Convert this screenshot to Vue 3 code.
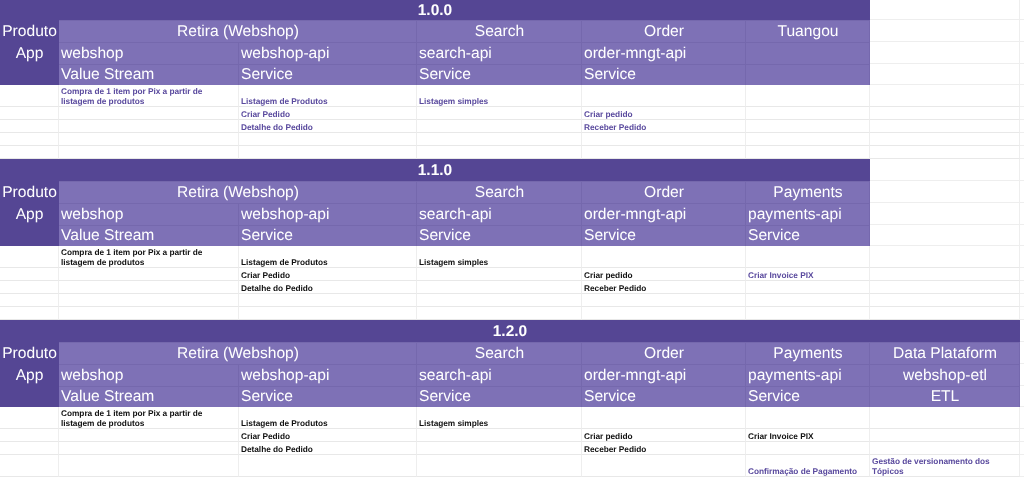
<script setup>
const P = 'accent'
const sections = [
  {
    version: '1.0.0', titleSpan: 6,
    heads: [
      ['Retira (Webshop)', 'Search', 'Order', 'Tuangou', ''],
      ['webshop', 'webshop-api', 'search-api', 'order-mngt-api', '', ''],
      ['Value Stream', 'Service', 'Service', 'Service', '', '']
    ],
    rows: [
      { h: 22, cells: ['Compra de 1 item por Pix a partir de listagem de produtos', 'Listagem de Produtos', 'Listagem simples', '', '', ''], tone: P },
      { h: 13, cells: ['', 'Criar Pedido', '', 'Criar pedido', '', ''], tone: P },
      { h: 13, cells: ['', 'Detalhe do Pedido', '', 'Receber Pedido', '', ''], tone: P },
      { h: 13, cells: ['', '', '', '', '', ''] },
      { h: 13, cells: ['', '', '', '', '', ''] }
    ]
  },
  {
    version: '1.1.0', titleSpan: 6,
    heads: [
      ['Retira (Webshop)', 'Search', 'Order', 'Payments', ''],
      ['webshop', 'webshop-api', 'search-api', 'order-mngt-api', 'payments-api', ''],
      ['Value Stream', 'Service', 'Service', 'Service', 'Service', '']
    ],
    rows: [
      { h: 22, cells: ['Compra de 1 item por Pix a partir de listagem de produtos', 'Listagem de Produtos', 'Listagem simples', '', '', ''] },
      { h: 13, cells: ['', 'Criar Pedido', '', 'Criar pedido', 'Criar Invoice PIX', ''], accent: [4] },
      { h: 13, cells: ['', 'Detalhe do Pedido', '', 'Receber Pedido', '', ''] },
      { h: 13, cells: ['', '', '', '', '', ''] },
      { h: 13, cells: ['', '', '', '', '', ''] }
    ]
  },
  {
    version: '1.2.0', titleSpan: 7,
    heads: [
      ['Retira (Webshop)', 'Search', 'Order', 'Payments', 'Data Plataform'],
      ['webshop', 'webshop-api', 'search-api', 'order-mngt-api', 'payments-api', 'webshop-etl'],
      ['Value Stream', 'Service', 'Service', 'Service', 'Service', 'ETL']
    ],
    rows: [
      { h: 22, cells: ['Compra de 1 item por Pix a partir de listagem de produtos', 'Listagem de Produtos', 'Listagem simples', '', '', ''] },
      { h: 13, cells: ['', 'Criar Pedido', '', 'Criar pedido', 'Criar Invoice PIX', ''] },
      { h: 13, cells: ['', 'Detalhe do Pedido', '', 'Receber Pedido', '', ''] },
      { h: 22, cells: ['', '', '', '', 'Confirmação de Pagamento', 'Gestão de versionamento dos Tópicos'], accent: [4, 5] }
    ]
  }
]
const leftLabels = ['Produto', 'App', '']
function headClass(s, r, i) {
  const col = s.heads[r].length === 5 ? i + 1 : i
  if (col === 5 && s.titleSpan === 6) return 'blank'
  if (col === 5 || (r === 0 && col > 0)) return 'head center'
  return 'head'
}
</script>

<template>
  <div class="sheet">
    <section v-for="s in sections" :key="s.version" class="block">
      <div class="row title-row">
        <div class="title" :class="{ wide: s.titleSpan === 7 }">{{ s.version }}</div>
        <div v-if="s.titleSpan === 6" class="blank"></div>
        <div class="edge"></div>
      </div>

      <div v-for="(cells, r) in s.heads" :key="r" class="row head-row" :class="{ short: r === 2 }">
        <div class="left">{{ leftLabels[r] }}</div>
        <div
          v-for="(c, i) in cells"
          :key="i"
          :class="[headClass(s, r, i), { span2: r === 0 && i === 0 }]"
        >{{ c }}</div>
        <div class="edge"></div>
      </div>

      <div
        v-for="(row, r) in s.rows"
        :key="'d' + r"
        class="row data-row"
        :style="{ height: row.h + 'px' }"
      >
        <div class="data"></div>
        <div
          v-for="(c, i) in row.cells"
          :key="i"
          class="data"
          :class="{ accent: row.tone === 'accent' || (row.accent || []).includes(i) }"
        >{{ c }}</div>
        <div class="edge"></div>
      </div>
    </section>
  </div>
</template>

<style scoped>
.sheet {
  width: 1024px;
  height: 479px;
  overflow: hidden;
  background: #fff;
  font-family: "Liberation Sans", Arial, sans-serif;
  text-rendering: geometricPrecision;
  filter: blur(0.35px);
}
.row {
  display: grid;
  grid-template-columns: 59px 180px 178px 165px 164px 124px 150px 4px;
}
.title-row {
  height: 22px;
}
.block:first-child .title-row {
  height: 20px;
}
.title {
  grid-column: 1 / span 6;
  background: #554694;
  color: #fff;
  font-size: 15.5px;
  font-weight: 700;
  padding-top: 1px;
  box-sizing: border-box;
  display: flex;
  align-items: center;
  justify-content: center;
}
.title.wide {
  grid-column: 1 / span 7;
}
.head-row {
  height: 22px;
}
.head-row.short {
  height: 21px;
}
.left {
  background: #554694;
  color: #fff;
  font-size: 15.6px;
  padding-top: 1px;
  box-sizing: border-box;
  display: flex;
  align-items: center;
  justify-content: center;
}
.head {
  background: #7e71b6;
  color: #fff;
  font-size: 15.6px;
  padding: 1px 0 0 2px;
  box-sizing: border-box;
  box-shadow: inset 0 1px 0 #7568ad, inset -1px 0 0 #7568ad;
  display: flex;
  align-items: center;
  white-space: nowrap;
}
.head.center {
  justify-content: center;
  padding-left: 0;
}
.head.span2 {
  grid-column: span 2;
}
.blank {
  border-right: 1px solid #eeeeee;
  border-bottom: 1px solid #eeeeee;
  box-sizing: border-box;
}
.edge {
  border-bottom: 1px solid #eeeeee;
  box-sizing: border-box;
}
.data {
  border-right: 1px solid #eeeeee;
  border-bottom: 1px solid #e8e8e8;
  box-sizing: border-box;
  color: #111;
  font-size: 8.3px;
  letter-spacing: -0.03px;
  line-height: 10px;
  font-weight: 700;
  padding: 0 6px 0 2px;
  display: flex;
  align-items: flex-end;
  overflow: hidden;
}
.data.accent {
  color: #5a4a9e;
}
</style>
